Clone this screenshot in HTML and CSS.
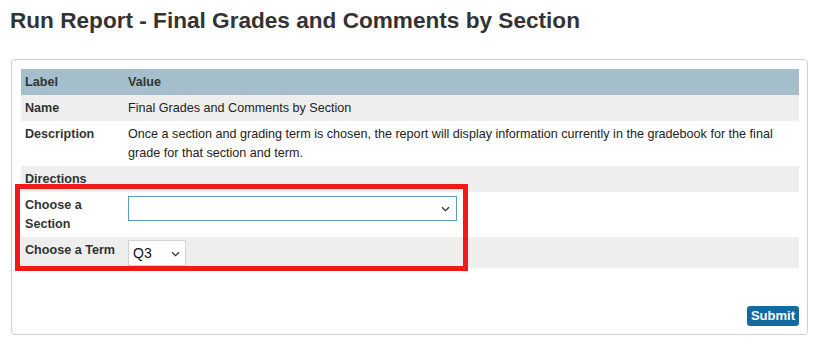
FILE: index.html
```html
<!DOCTYPE html>
<html>
<head>
<meta charset="utf-8">
<link rel="stylesheet" href="styles.css">
</head>
<body>
<div class="page">
  <h1 class="title">Run Report - Final Grades and Comments by Section</h1>
  <div class="panel">
    <table class="report">
      <thead>
        <tr><th class="col-label">Label</th><th>Value</th></tr>
      </thead>
      <tbody>
        <tr class="alt"><th>Name</th><td>Final Grades and Comments by Section</td></tr>
        <tr><th>Description</th><td>Once a section and grading term is chosen, the report will display information currently in the gradebook for the final grade for that section and term.</td></tr>
        <tr class="alt"><th>Directions</th><td></td></tr>
        <tr class="tall"><th>Choose a<br>Section</th><td>
          <div class="select select-section"><span class="select-val"></span>
            <svg class="chev" width="9" height="6" viewBox="0 0 9 6"><path d="M1 1.2 L4.5 4.6 L8 1.2" fill="none" stroke="#333" stroke-width="1.3"/></svg>
          </div>
        </td></tr>
        <tr class="alt term"><th>Choose a Term</th><td>
          <div class="select select-term"><span class="select-val">Q3</span>
            <svg class="chev" width="9" height="6" viewBox="0 0 9 6"><path d="M1 1.2 L4.5 4.6 L8 1.2" fill="none" stroke="#333" stroke-width="1.3"/></svg>
          </div>
        </td></tr>
      </tbody>
    </table>
    <div class="actions"><button class="submit">Submit</button></div>
  </div>
  <div class="highlight"></div>
</div>
</body>
</html>
```

FILE: styles.css
```css
html, body {
  margin: 0;
  padding: 0;
  background: #fff;
}
body {
  font-family: "Liberation Sans", Arial, Helvetica, sans-serif;
  color: #333;
}
.page {
  position: relative;
  padding: 0 11px 0 11px;
}
.title {
  margin: 0;
  padding: 8px 0 0 0;
  margin-left: -1px;
  font-size: 22.6px;
  line-height: 26px;
  font-weight: bold;
  color: #333;
  height: 51px;
}
.panel {
  border: 1px solid #cfcfcf;
  border-radius: 4px;
  padding: 9px 8px 8px 9px;
}
.report {
  width: 100%;
  border-collapse: collapse;
  font-size: 12.6px;
  line-height: 19px;
}
.report th, .report td {
  text-align: left;
  vertical-align: top;
  padding: 4px 4px 3px 4px;
}
.report th {
  font-weight: bold;
  color: #333;
}
.report td {
  font-weight: normal;
  color: #222;
}
.report thead th {
  background: #a4bfcb;
  font-weight: bold;
}
.col-label {
  width: 95px;
}
.report tr.alt th, .report tr.alt td {
  background: #eeeeee;
}
.report tr.tall td {
  padding-top: 4px;
}
.report tr.term td {
  padding-top: 3px;
  padding-bottom: 2px;
}
.select {
  position: relative;
  box-sizing: border-box;
  background: #fff;
  font-size: 14px;
  color: #111;
}
.select-section {
  width: 329px;
  height: 25px;
  border: 1px solid #5aa2ba;
}
.select-term {
  width: 58px;
  height: 26px;
  border: 1px solid #d2d2d2;
  line-height: 24px;
  padding-left: 4px;
}
.chev {
  position: absolute;
  top: 10px;
}
.select-section .chev {
  right: 6px;
  top: 9px;
}
.select-term .chev {
  right: 5px;
}
.actions {
  display: flex;
  justify-content: flex-end;
  padding-top: 38px;
}
.submit {
  font-family: "Liberation Sans", Arial, Helvetica, sans-serif;
  font-size: 13px;
  font-weight: bold;
  color: #fff;
  background: #136aa2;
  border: none;
  border-radius: 3px;
  height: 20px;
  padding: 0 4px;
  line-height: 20px;
}
.highlight {
  position: absolute;
  left: 15px;
  top: 184px;
  width: 453px;
  height: 87px;
  box-sizing: border-box;
  border: 5px solid #f01a1a;
  pointer-events: none;
}
```
